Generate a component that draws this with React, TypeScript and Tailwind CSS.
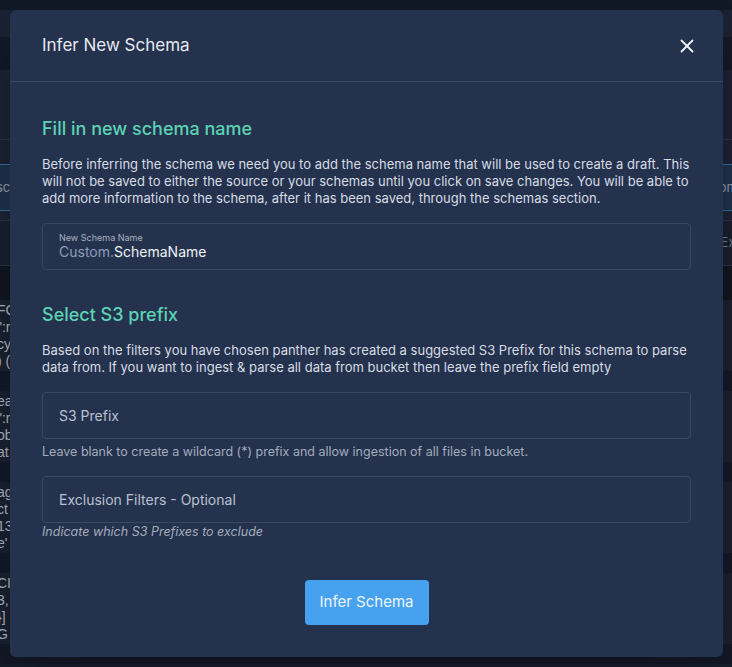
import { X } from 'lucide-react'

const codeBlocks = [
  ['FC', '":r', 'cy', ') ('],
  ['ea', '":r', 'ob', 'at'],
  ['ag', 'ct', '13', "e'"],
  ['CI', '3,', '}]', 'G'],
]

function Field({ label, hint, italic }: { label: string; hint?: string; italic?: boolean }) {
  return (
    <div>
      <div className="flex h-[47px] items-center rounded border border-[#3a4865] px-4 text-[14px] text-[#b9c1cf]">
        {label}
      </div>
      {hint && (
        <p
          className={`text-[12.5px] leading-[17px] text-[#a3acbb] ${italic ? 'mt-0 italic' : 'mt-[4px]'}`}
        >
          {hint}
        </p>
      )}
    </div>
  )
}

export default function App() {
  return (
    <div className="relative h-[667px] w-[732px] overflow-hidden bg-[#151c2b] font-['Inter',sans-serif]">
      {/* Dimmed page behind */}
      <div className="flex flex-col">
        <div className="h-[10px] bg-[#111826]" />
        <div className="h-[27px] bg-[#1a2132]" />
        <div className="h-[33px] bg-[#121826]" />
        <div className="h-[70px] border-b border-[#283247] bg-[#1a2132]" />
        <div className="h-[24px] bg-[#1a2132]" />
        <div className="flex h-[47px] items-center justify-between border-y border-[#2e6a99] bg-[#1c3049] text-[13px] text-[#8a94a5]">
          <span className="-ml-[4px]">sch</span>
          <span className="-mr-[6px]">rom</span>
        </div>
        <div className="h-[10px] border-b border-[#283247] bg-[#1a2132]" />
        <div className="flex h-[45px] items-center justify-end border-b border-[#283247] bg-[#171e2d] text-[13px] text-[#6d7687]">
          <span className="-mr-[8px]">Ext</span>
        </div>
        <div className="h-[34px] bg-[#0f1520]" />
        {codeBlocks.map((lines, i) => (
          <div
            key={i}
            className="flex flex-col border-b-[20px] border-[#121826] bg-[#181f2e] pt-[2px] pb-[1px] font-['Liberation_Sans',sans-serif] text-[14px] leading-[17px] text-[#a7aeb9]"
          >
            {lines.map((l, j) => (
              <span key={j} className="-ml-[3px]">
                {l}
              </span>
            ))}
          </div>
        ))}
      </div>

      {/* Modal */}
      <div className="absolute left-[10px] top-[10px] flex h-[647px] w-[713px] flex-col rounded-md bg-[#24324e] shadow-2xl">
        <div className="flex h-[72px] items-center justify-between border-b border-[#3a4866] pl-[32px] pr-[25px]">
          <h2 className="text-[17px] text-[#e6e9ef]">Infer New Schema</h2>
          <X className="h-[22px] w-[22px] text-[#eef1f5]" strokeWidth={2} />
        </div>

        <div className="flex flex-1 flex-col px-[32px] pt-[33px]">
          <h3 className="text-[18px] font-medium text-[#5dd2b4]">Fill in new schema name</h3>
          <p className="mt-[14px] text-[13px] leading-[17px] text-[#d7dce4]">
            Before inferring the schema we need you to add the schema name that will be used to create a draft. This will not be saved to either the source or your schemas until you click on save changes. You will be able to add more information to the schema, after it has been saved, through the schemas section.
          </p>
          <div className="mt-[16px] flex h-[47px] flex-col justify-center rounded border border-[#3a4865] px-4">
            <span className="text-[9px] leading-[11px] text-[#a9b1bf]">New Schema Name</span>
            <span className="text-[14px] leading-[18px] text-[#eef1f5]">
              <span className="text-[#8e9cb8]">Custom.</span>SchemaName
            </span>
          </div>

          <h3 className="mt-[31px] text-[18px] font-medium text-[#5dd2b4]">Select S3 prefix</h3>
          <p className="mt-[14px] text-[13px] leading-[17px] text-[#d7dce4]">
            Based on the filters you have chosen panther has created a suggested S3 Prefix for this schema to parse data from. If you want to ingest &amp; parse all data from bucket then leave the prefix field empty
          </p>
          <div className="mt-[16px] flex flex-col gap-[16px]">
            <Field label="S3 Prefix" hint="Leave blank to create a wildcard (*) prefix and allow ingestion of all files in bucket." />
            <Field label="Exclusion Filters - Optional" hint="Indicate which S3 Prefixes to exclude" italic />
          </div>

          <div className="mt-[40px] flex justify-center">
            <button className="h-[45px] w-[124px] rounded bg-[#46a2ee] text-[15px] text-[#eef5fd]">Infer Schema</button>
          </div>
        </div>
      </div>
    </div>
  )
}
